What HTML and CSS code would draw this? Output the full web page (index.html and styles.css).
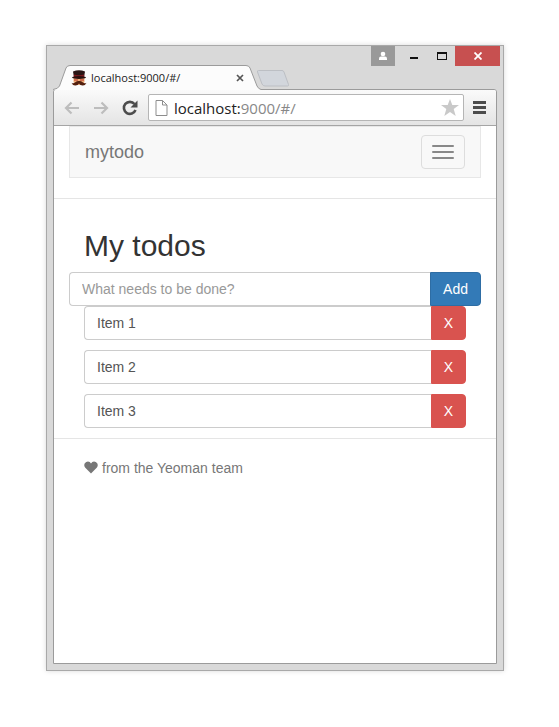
FILE: index.html
```
<!DOCTYPE html>
<html lang="en">
  <head>
    <meta charset="UTF-8" />
    <meta name="viewport" content="width=device-width, initial-scale=1.0" />
    <title>mytodo</title>
    <link rel="stylesheet" href="styles.css">
  </head>
  <body>
    <div class="window">
      <div class="window-controls">
        <button class="control profile" aria-label="Profile">
          <svg width="10" height="10" viewBox="0 0 10 10"><circle cx="5" cy="3" r="2.3" fill="#fff"/><path d="M1 9V7.500Q1 5.500 3 5.500H7Q9 5.500 9 7.500V9Z" fill="#fff"/></svg>
        </button>
        <button class="control minimize" aria-label="Minimize">
          <svg width="10" height="10" viewBox="0 0 10 10"><path d="M1 6h8v2H1z" fill="#111"/></svg>
        </button>
        <button class="control maximize" aria-label="Maximize">
          <svg width="10" height="10" viewBox="0 0 10 10"><path d="M0 1h10v8H0zM1 3v5h8V3z" fill="#111" fill-rule="evenodd"/></svg>
        </button>
        <button class="control close" aria-label="Close">
          <svg width="8" height="8" viewBox="0 0 8 8"><path d="M.5 .5l7 7M7.500 .5l-7 7" stroke="#fff" stroke-width="1.800"/></svg>
        </button>
      </div>

      <div class="tabs">
        <div class="tab">
          <svg class="tab-shape" width="208" height="25" viewBox="0 0 208 25">
            <path d="M0 25V24.500Q5 24 6.500 21L13 3Q14 .5 17 .5H193Q196 .5 197 3L204 21Q205.500 24 208 24.500V25Z" fill="#fcfcfc"/>
            <path d="M0 24.500Q5 24 6.500 21L13 3Q14 .5 17 .5H193Q196 .5 197 3L204 21Q205.500 24 208 24.500" fill="none" stroke="#9b9b9b"/>
          </svg>
          <svg class="favicon" width="16" height="16" viewBox="0 0 16 16">
            <path d="M2 1.500Q8-1 14 1.500L13 7H3Z" fill="#2a1515"/>
            <path d="M2.800 4.500Q8 6 13.200 4.500V7H2.800Z" fill="#7d1a1e"/>
            <path d="M2.500 8H13.500V12Q12 15 8 15T2.500 12Z" fill="#efaf78"/>
            <ellipse cx="8" cy="7.500" rx="7" ry="1.500" fill="#2a1010"/>
            <path d="M3 9.500H7V10.500H3ZM9 9.500H13V10.500H9Z" fill="#b83228"/>
            <path d="M8 11Q5.500 10.500 4 12.500Q2.500 14 .5 12.800Q1.500 15.700 4.500 15.500Q7 15.300 8 13.500Q9 15.300 11.500 15.500Q14.500 15.700 15.500 12.800Q13.500 14 12 12.500Q10.500 10.500 8 11Z" fill="#54200f"/>
          </svg>
          <span class="tab-title">localhost:9000/#/</span>
          <button class="tab-close" aria-label="Close tab">
            <svg width="8" height="8" viewBox="0 0 8 8"><path d="M1 1l6 6M7 1l-6 6" stroke="#555" stroke-width="1.700"/></svg>
          </button>
        </div>
        <button class="new-tab" aria-label="New tab">
          <svg width="34" height="17" viewBox="0 0 34 17"><path d="M2.500 .5H26Q27.500 .5 28 2L32.500 14.500Q33 16 31.500 16H9Q7 16 6 14L1.500 2Q1 .5 2.500 .5Z" fill="#d2d6dc" stroke="#bcbfc4"/></svg>
        </button>
      </div>

      <div class="browser">
        <div class="toolbar">
          <button class="tool" aria-label="Back">
            <svg width="16" height="14" viewBox="0 0 16 14"><path d="M15 7H2M7.500 1.500L2 7l5.500 5.500" fill="none" stroke="#bdbdbd" stroke-width="2.200"/></svg>
          </button>
          <button class="tool" aria-label="Forward">
            <svg width="16" height="14" viewBox="0 0 16 14"><path d="M1 7h13M8.500 1.500L14 7l-5.500 5.500" fill="none" stroke="#bdbdbd" stroke-width="2.200"/></svg>
          </button>
          <button class="tool" aria-label="Reload">
            <svg width="16" height="16" viewBox="0 0 16 16"><path d="M12.500 4A6 6 0 1 0 13.500 10" fill="none" stroke="#4c4c4c" stroke-width="2.600"/><path d="M15.500 .5V7.500H8.500Z" fill="#4c4c4c"/></svg>
          </button>
          <div class="address">
            <svg width="13" height="16" viewBox="0 0 13 16"><path d="M1 .5H7.500L12 5V15.500H1ZM7.500 .5V5H12" fill="#fff" stroke="#8d8d8d"/></svg>
            <span class="url">localhost:<span class="url-path">9000/#/</span></span>
            <svg width="18" height="17" viewBox="0 0 18 17"><path d="M9 0l2.300 6H18l-5.300 4 2 7L9 13l-5.700 4 2-7L0 6h6.700Z" fill="#c9c9c9"/></svg>
          </div>
          <button class="tool menu" aria-label="Menu">
            <svg width="13" height="13" viewBox="0 0 13 13"><path d="M0 0h13v3H0zM0 5h13v3H0zM0 10h13v3H0z" fill="#4c4c4c"/></svg>
          </button>
        </div>

        <div class="page">
          <header class="header">
            <nav class="navbar">
              <a class="brand" href="#/">mytodo</a>
              <button class="navbar-toggle" aria-label="Toggle navigation">
                <span class="icon-bar"></span>
                <span class="icon-bar"></span>
                <span class="icon-bar"></span>
              </button>
            </nav>
          </header>

          <main class="container">
            <h2>My todos</h2>
            <form class="input-group">
              <input type="text" class="form-control" placeholder="What needs to be done?" aria-label="New todo" />
              <button type="button" class="btn btn-primary">Add</button>
            </form>
            <div class="todos">
              <div class="input-group">
                <input type="text" class="form-control" value="Item 1" aria-label="Todo 1" />
                <button class="btn btn-danger" aria-label="Remove Item 1">X</button>
              </div>
              <div class="input-group">
                <input type="text" class="form-control" value="Item 2" aria-label="Todo 2" />
                <button class="btn btn-danger" aria-label="Remove Item 2">X</button>
              </div>
              <div class="input-group">
                <input type="text" class="form-control" value="Item 3" aria-label="Todo 3" />
                <button class="btn btn-danger" aria-label="Remove Item 3">X</button>
              </div>
            </div>
          </main>

          <footer class="footer">
            <svg width="14" height="15" viewBox="0 0 14 15"><path d="M7 12.500L1.300 6.800Q-.5 4.500 .8 2.300Q2 .5 4 .5Q6 .5 7 2.500Q8 .5 10 .5Q12 .5 13.200 2.300Q14.500 4.500 12.700 6.800Z" fill="#777"/></svg>
            <span>from the Yeoman team</span>
          </footer>
        </div>
      </div>
    </div>
  </body>
</html>
```

FILE: styles.css
```
* {
  box-sizing: border-box;
}
body {
  font-family: "Liberation Sans", Arial, sans-serif;
  font-size: 14px;
  line-height: 20px;
  color: #333;
  background-color: #fff;
  margin: 0;
  padding: 45px 55px 56px 46px;
  min-height: 100vh;
  display: flex;
}
button {
  font-family: inherit;
  padding: 0;
  border: none;
  background: none;
  cursor: pointer;
}
svg {
  display: block;
  flex: none;
}

/* browser window */
.window {
  flex: 1;
  min-width: 0;
  display: flex;
  flex-direction: column;
  padding: 0 6px 6px;
  border: 1px solid #a9a9a9;
  background-color: #d9d9d9;
  box-shadow: 0 0 5px rgba(0, 0, 0, 0.15);
}
.window-controls {
  display: flex;
  justify-content: flex-end;
  margin-right: -3px;
  height: 20px;
}
.control {
  display: flex;
  align-items: center;
  justify-content: center;
  width: 27px;
}
.profile {
  width: 24px;
  margin-right: 5px;
  background-color: #999;
}
.minimize {
  width: 28px;
}
.close {
  width: 45px;
  background-color: #c75050;
}
.tabs {
  display: flex;
  height: 23px;
}
.tab {
  position: relative;
  display: flex;
  align-items: center;
  gap: 4px;
  width: 208px;
  height: 24px;
  padding: 0 17px 0 18px;
}
.tab-shape {
  position: absolute;
  bottom: 0;
  left: 0;
}
.favicon,
.tab-title,
.tab-close {
  position: relative;
}
.tab-title {
  flex: 1;
  font-family: "Open Sans", sans-serif;
  font-size: 11px;
  color: #222;
}
.new-tab {
  margin: 4px 0 0 -5px;
  height: 17px;
}
.browser {
  flex: 1;
  display: flex;
  flex-direction: column;
  border: 1px solid #9b9b9b;
  border-radius: 3px 3px 0 0;
  background-color: #fff;
}
.toolbar {
  display: flex;
  align-items: center;
  gap: 13px;
  height: 36px;
  padding: 0 10px;
  border-bottom: 1px solid #a5a5a5;
  border-radius: 2px 2px 0 0;
  background: linear-gradient(#fafafa, #e4e4e4);
}
.address {
  flex: 1;
  display: flex;
  align-items: center;
  gap: 6px;
  min-width: 0;
  height: 27px;
  margin-right: -4px;
  margin-left: -3px;
  padding: 0 4px 0 6px;
  border: 1px solid #b5b5b5;
  border-radius: 2px;
  background-color: #fff;
}
.url {
  flex: 1;
  font-family: "Open Sans", sans-serif;
  font-size: 15px;
  color: #222;
}
.url-path {
  color: #888;
}

/* app */
.header {
  padding: 0 15px 20px;
  border-bottom: 1px solid #e5e5e5;
}
.navbar {
  display: flex;
  align-items: center;
  justify-content: space-between;
  height: 52px;
  padding: 0 15px;
  border: 1px solid #e7e7e7;
  background-color: #f8f8f8;
}
.brand {
  font-size: 18px;
  color: #777;
  text-decoration: none;
}
.navbar-toggle {
  display: flex;
  flex-direction: column;
  gap: 4px;
  padding: 9px 10px;
  border: 1px solid #ddd;
  border-radius: 4px;
}
.icon-bar {
  width: 22px;
  height: 2px;
  border-radius: 1px;
  background-color: #888;
}
.container {
  padding: 30px 15px 10px;
}
h2 {
  margin: 0 15px 10px;
  font-size: 30px;
  font-weight: 500;
  line-height: 33px;
}
.input-group {
  display: flex;
}
.todos {
  display: flex;
  flex-direction: column;
  gap: 10px;
  padding: 0 15px;
}
.form-control {
  flex: 1;
  min-width: 0;
  height: 34px;
  padding: 6px 12px;
  font-family: inherit;
  font-size: 14px;
  color: #555;
  border: 1px solid #ccc;
  border-right: none;
  border-radius: 4px 0 0 4px;
  background-color: #fff;
}
.form-control::placeholder {
  color: #999;
  opacity: 1;
}
.btn {
  height: 34px;
  padding: 6px 12px;
  font-size: 14px;
  line-height: 20px;
  color: #fff;
  border: 1px solid;
  border-radius: 0 4px 4px 0;
}
.btn-primary {
  background-color: #337ab7;
  border-color: #2e6da4;
}
.btn-danger {
  background-color: #d9534f;
  border-color: #d9534f;
}
.footer {
  display: flex;
  align-items: center;
  gap: 4px;
  padding: 19px 30px;
  color: #777;
  border-top: 1px solid #e5e5e5;
}
```
